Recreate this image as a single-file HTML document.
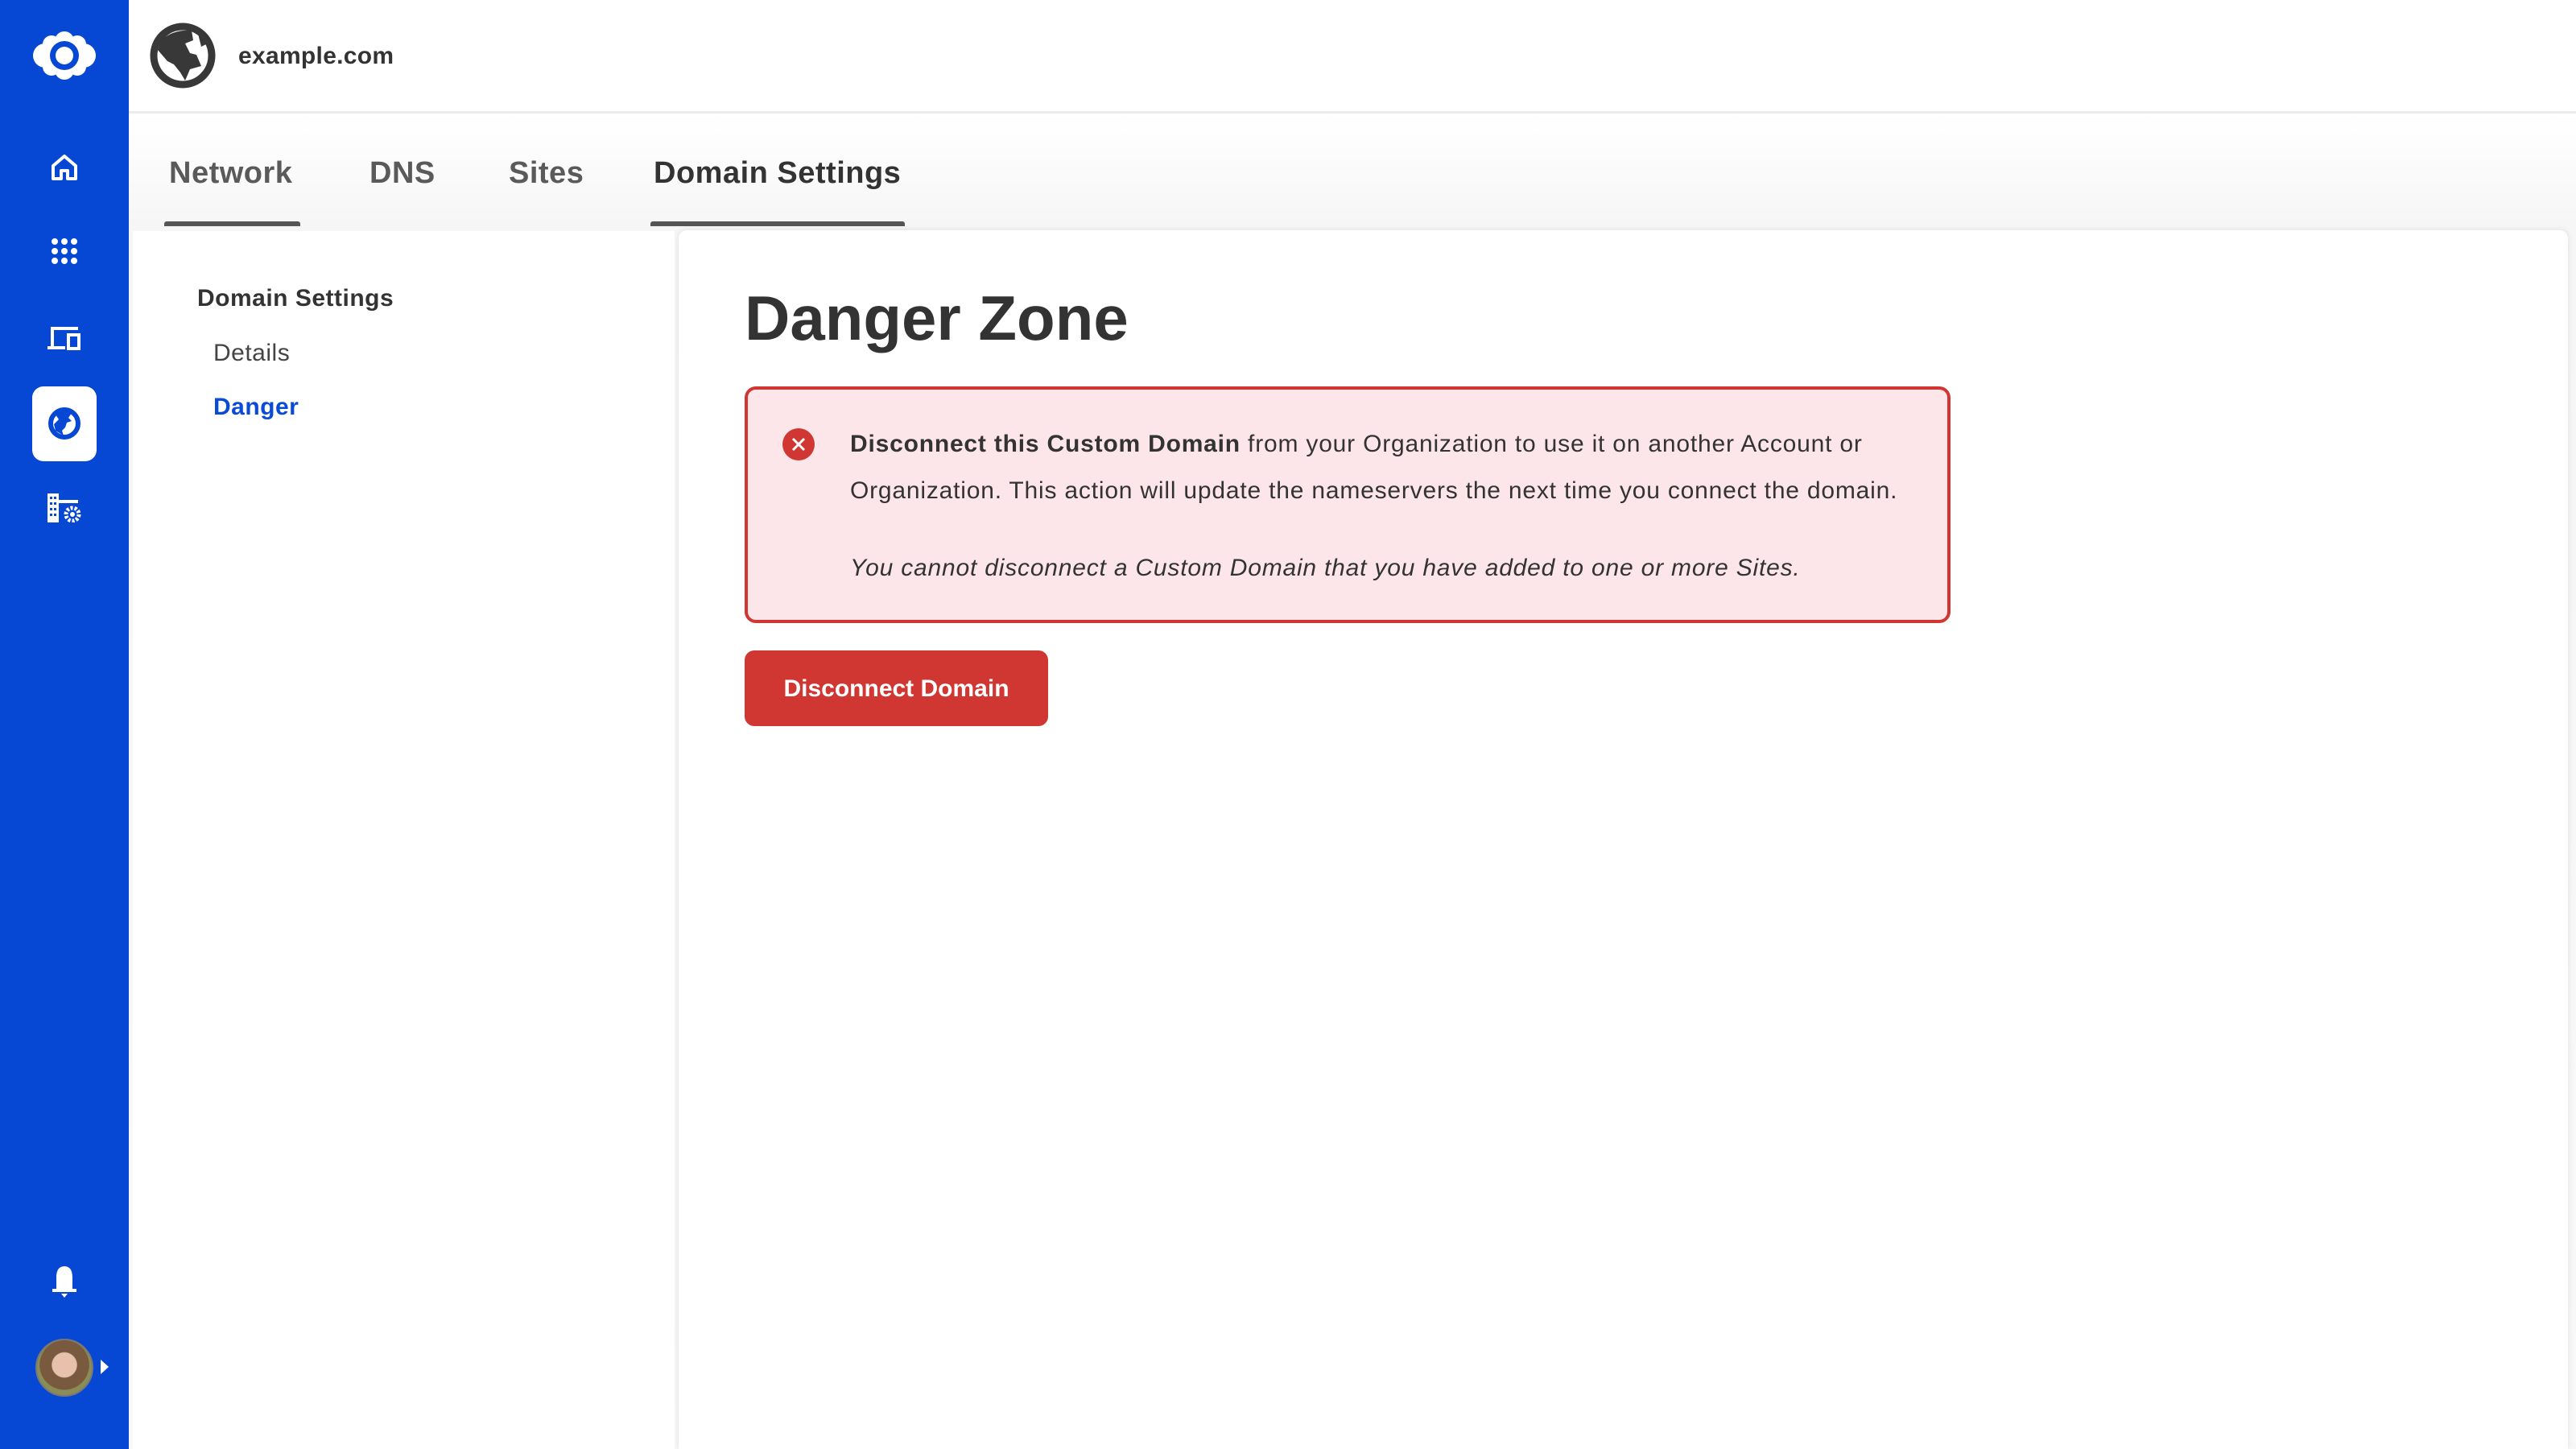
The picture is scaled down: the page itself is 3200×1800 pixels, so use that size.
<!DOCTYPE html>
<html><head><meta charset="utf-8"><style>
*{margin:0;padding:0;box-sizing:border-box}
body{width:3200px;height:1800px;overflow:hidden;background:#fff;font-family:"Liberation Sans",sans-serif;position:relative;color:#333}
.side{position:absolute;left:0;top:0;width:160px;height:1800px;background:#0647d4}
.ic{position:absolute;left:80px;transform:translate(-50%,-50%)}
.hdr{position:absolute;left:160px;top:0;right:0;height:141px;background:#fff;border-bottom:3px solid #ececec}
.sub{position:absolute;left:160px;top:141px;right:0;bottom:0;background:linear-gradient(#fff 0,#f6f6f6 140px,#f8f8f8 100%)}
.tab{position:absolute;top:194px;font-size:38px;font-weight:bold;color:#5a5a5a;letter-spacing:0.5px}
.ul{position:absolute;top:275px;height:6px;background:#555;border-radius:3px 3px 0 0}
.left{position:absolute;left:165px;top:287px;width:673px;bottom:0;background:#fff}
.card{position:absolute;left:843px;top:286px;width:2347px;bottom:0;background:#fff;border-radius:10px 10px 0 0;box-shadow:0 0 8px rgba(0,0,0,.1)}
.t{position:absolute;white-space:nowrap}
.a{font-size:30px;color:#333;letter-spacing:0.8px}
</style></head><body>
<div class="side">
 <svg class="ic" style="top:69px" width="80" height="60" viewBox="0 0 80 60"><g fill="#fff"><circle cx="40" cy="12" r="12"/><circle cx="40" cy="48" r="12"/><circle cx="16" cy="30" r="15"/><circle cx="64" cy="30" r="15"/><circle cx="24" cy="16" r="11"/><circle cx="56" cy="16" r="11"/><circle cx="24" cy="44" r="11"/><circle cx="56" cy="44" r="11"/></g><circle cx="40" cy="30" r="18" fill="#0647d4"/><circle cx="40" cy="30" r="11" fill="#fff"/></svg>
 <svg class="ic" style="top:208px" width="36" height="36" viewBox="0 0 36 36"><path d="M4 16 L18 4 L32 16 V32 H22 V22 H14 V32 H4 Z" fill="none" stroke="#fff" stroke-width="4" stroke-linejoin="round"/></svg>
 <svg class="ic" style="top:312px" width="34" height="34" viewBox="0 0 34 34"><g fill="#fff"><circle cx="5" cy="5" r="4"/><circle cx="17" cy="5" r="4"/><circle cx="29" cy="5" r="4"/><circle cx="5" cy="17" r="4"/><circle cx="17" cy="17" r="4"/><circle cx="29" cy="17" r="4"/><circle cx="5" cy="29" r="4"/><circle cx="17" cy="29" r="4"/><circle cx="29" cy="29" r="4"/></g></svg>
 <svg class="ic" style="top:420px" width="42" height="30" viewBox="0 0 42 30"><path d="M6 27 V3 H38" fill="none" stroke="#fff" stroke-width="4"/><rect x="0" y="25" width="22" height="4" fill="#fff"/><rect x="26" y="11" width="13" height="17" fill="none" stroke="#fff" stroke-width="4"/></svg>
 <div style="position:absolute;left:40px;top:480px;width:80px;height:93px;background:#fff;border-radius:14px"></div>
 <svg class="ic" style="top:526px" width="42" height="42" viewBox="0 0 42 42"><circle cx="21" cy="21" r="17" fill="none" stroke="#0647d4" stroke-width="6"/><path d="M10 10 Q20 4 30 8 L26 14 L30 18 L24 20 L22 26 L18 30 L20 36 L10 30 L8 22 L14 16 Z" fill="#0647d4"/></svg>
 <svg class="ic" style="top:631px" width="42" height="36" viewBox="0 0 42 36"><g fill="#fff"><rect x="0" y="0" width="14" height="36"/><rect x="14" y="8" width="24" height="4"/></g><g fill="#0647d4"><rect x="3" y="4" width="3" height="3"/><rect x="8" y="4" width="3" height="3"/><rect x="3" y="11" width="3" height="3"/><rect x="8" y="11" width="3" height="3"/><rect x="3" y="18" width="3" height="3"/><rect x="8" y="18" width="3" height="3"/><rect x="3" y="25" width="3" height="3"/><rect x="8" y="25" width="3" height="3"/></g><circle cx="31" cy="26" r="8" fill="none" stroke="#fff" stroke-width="5" stroke-dasharray="3 2"/><circle cx="31" cy="26" r="3" fill="#fff"/></svg>
 <svg class="ic" style="top:1592px" width="34" height="42" viewBox="0 0 34 42"><path d="M17 2 C9 2 7 9 7 16 V30 H2 V34 H32 V30 H27 V16 C27 9 25 2 17 2Z" fill="#fff"/><path d="M13 36 H21 L17 41 Z" fill="#fff"/></svg>
 <div style="position:absolute;left:44px;top:1663px;width:72px;height:72px;border-radius:50%;background:radial-gradient(circle at 50% 45%,#e8c1ad 0 30%,#7a5a3e 32% 60%,#8a8d55 62%);border:2px solid #777"></div>
 <svg style="position:absolute;left:125px;top:1689px" width="10" height="18"><path d="M0 0 L10 9 L0 18Z" fill="#fff"/></svg>
</div>
<div class="hdr">
 <svg style="position:absolute;left:26px;top:28px" width="82" height="82" viewBox="0 0 82 82"><circle cx="41" cy="41" r="36" fill="none" stroke="#383838" stroke-width="9"/><path d="M14 22 Q30 8 52 10 L54 22 L44 26 L50 38 L58 40 L64 54 L50 58 L44 72 L38 62 L30 52 L22 48 L10 34 Z" fill="#383838"/><path d="M60 14 L72 26 L64 30 Z" fill="#383838"/></svg>
 <div class="t" style="left:136px;top:53px;font-size:30px;font-weight:bold;color:#333;letter-spacing:0.3px">example.com</div>
</div>
<div class="sub"></div>
<div class="tab" style="left:210px">Network</div>
<div class="tab" style="left:459px">DNS</div>
<div class="tab" style="left:632px">Sites</div>
<div class="tab" style="left:812px;color:#333">Domain Settings</div>
<div class="ul" style="left:204px;width:169px"></div>
<div class="ul" style="left:808px;width:316px"></div>
<div class="left"></div>
<div class="card"></div>
<div class="t" style="left:245px;top:354px;font-size:30px;font-weight:bold;color:#333;letter-spacing:0.5px">Domain Settings</div>
<div class="t" style="left:265px;top:422px;font-size:30px;color:#444;letter-spacing:0.5px">Details</div>
<div class="t" style="left:265px;top:489px;font-size:30px;font-weight:bold;color:#0a4bd6;letter-spacing:0.5px">Danger</div>
<div class="t" style="left:925px;top:350px;font-size:78px;font-weight:bold;color:#333">Danger Zone</div>
<div style="position:absolute;left:925px;top:480px;width:1498px;height:294px;border:4px solid #d03632;border-radius:14px;background:#fde6e9"></div>
<svg style="position:absolute;left:971px;top:531px" width="42" height="42"><circle cx="21" cy="21" r="20" fill="#d03632"/><path d="M14 14 L28 28 M28 14 L14 28" stroke="#fff" stroke-width="3"/></svg>
<div class="t a" style="left:1056px;top:535px"><b>Disconnect this Custom Domain</b> from your Organization to use it on another Account or</div>
<div class="t a" style="left:1056px;top:593px">Organization. This action will update the nameservers the next time you connect the domain.</div>
<div class="t a" style="left:1056px;top:689px;font-style:italic">You cannot disconnect a Custom Domain that you have added to one or more Sites.</div>
<div style="position:absolute;left:925px;top:808px;width:377px;height:94px;background:#d03632;border-radius:12px;color:#fff;font-size:30px;font-weight:bold;text-align:center;line-height:96px">Disconnect Domain</div>
</body></html>
